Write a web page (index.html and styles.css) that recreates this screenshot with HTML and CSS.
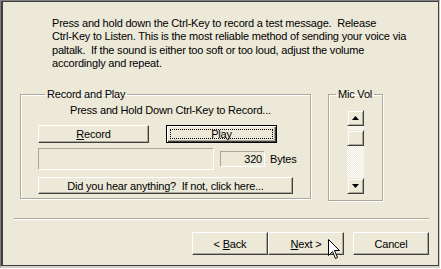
FILE: index.html
```html
<!DOCTYPE html>
<html lang="en">

<head>
    <meta charset="UTF-8">
    <title>Audio Setup</title>
    <link rel="stylesheet" href="styles.css">
</head>

<body>
    <div class="window">
        <div class="panel">
            <p class="intro">Press and hold down the Ctrl-Key to record a test message.&nbsp; Release<br>Ctrl-Key to Listen. This is the most reliable method of sending your voice via<br>paltalk.&nbsp; If the sound is either too soft or too loud, adjust the volume<br>accordingly and repeat.</p>

            <div class="groups">
                <fieldset class="group record-group">
                    <legend>Record and Play</legend>
                    <div class="hint">Press and Hold Down Ctrl-Key to Record...</div>
                    <div class="button-row">
                        <button class="btn btn-half"><u>R</u>ecord</button>
                        <button class="btn btn-half btn-default"><span class="focus">Play</span></button>
                    </div>
                    <div class="level-row">
                        <div class="level-field"></div>
                        <div class="bytes-field">320</div>
                        <span class="bytes-label">Bytes</span>
                    </div>
                    <button class="btn btn-full">Did you hear anything?&nbsp; If not, click here...</button>
                </fieldset>

                <fieldset class="group mic-group">
                    <legend>Mic Vol</legend>
                    <div class="scrollbar">
                        <div class="scroll-btn">
                            <svg width="7" height="4" viewBox="0 0 7 4"><polygon points="3.5,0 7,4 0,4" fill="#000"/></svg>
                        </div>
                        <div class="scroll-track">
                            <div class="scroll-thumb"></div>
                        </div>
                        <div class="scroll-btn">
                            <svg width="7" height="4" viewBox="0 0 7 4"><polygon points="0,0 7,0 3.5,4" fill="#000"/></svg>
                        </div>
                    </div>
                </fieldset>
            </div>

            <div class="separator"></div>

            <div class="nav-buttons">
                <button class="btn btn-nav">&lt; <u>B</u>ack</button>
                <button class="btn btn-nav"><u>N</u>ext &gt;</button>
                <button class="btn btn-nav btn-cancel">Cancel</button>
            </div>
        </div>

        <!-- mouse pointer resting on Next -->
        <svg class="cursor" width="12" height="20" viewBox="0 0 12 20">
            <polygon points="0.5,0.5 0.5,16.5 4.5,12.5 7.5,19.5 9.5,18.5 6.5,11.5 11.5,11.5" fill="#fff" stroke="#000" stroke-width="1"/>
        </svg>
    </div>
</body>

</html>
```

FILE: styles.css
```css
body {
    margin: 0;
    background-color: #ffffff;
    font-family: "Liberation Sans", Arial, sans-serif;
    font-size: 11px;
    letter-spacing: -0.2px;
    color: #000000;
}

.window {
    position: relative;
    width: 440px;
    height: 268px;
    box-sizing: border-box;
    border-top: 1px solid #808080;
    border-left: 1px solid #808080;
    border-right: 1px solid #d4d0c8;
    border-bottom: 2px solid #d4d0c8;
}

.panel {
    height: 100%;
    box-sizing: border-box;
    background-color: #ece9d8;
    border: 1px solid #404040;
    border-left-width: 2px;
}

.intro {
    margin: 0;
    padding: 15px 0 0 49px;
    line-height: 13.3px;
}

.groups {
    display: flex;
    align-items: flex-start;
    gap: 17px;
    margin: 18px 0 0 17px;
}

.group {
    margin: 0;
    border: 1px solid #aca899;
    box-shadow: inset 1px 1px 0 #ffffff, 1px 1px 0 #ffffff;
    min-width: 0;
}

.group legend {
    margin-left: 7px;
    padding: 0 2px;
    line-height: 13px;
}

.record-group {
    width: 291px;
    box-sizing: border-box;
    padding: 3px 0 4px 17px;
}

.mic-group {
    width: 55px;
    box-sizing: border-box;
    padding: 9px 0 6px 0;
    display: flex;
    justify-content: center;
}

.hint {
    line-height: 13px;
    padding-left: 32px;
}

.btn {
    font-family: "Liberation Sans", Arial, sans-serif;
    font-size: 11px;
    letter-spacing: -0.2px;
    color: #000000;
    background-color: #ece9d8;
    border: 1px solid;
    border-color: #ffffff #404040 #404040 #ffffff;
    box-shadow: inset -1px -1px 0 #aca899;
    padding: 0;
    margin: 0;
    box-sizing: border-box;
    cursor: default;
}

.btn u {
    text-decoration-thickness: 1px;
    text-underline-offset: 1px;
}

.button-row {
    display: flex;
    gap: 17px;
    margin-top: 8px;
}

.btn-half {
    width: 111px;
    height: 18px;
}

.btn-default {
    display: flex;
    padding: 3px;
    border: 1px solid #000000;
    box-shadow: inset 1px 1px 0 #ffffff, inset -1px -1px 0 #404040, inset -2px -2px 0 #aca899;
}

.focus {
    flex: 1;
    border: 1px dotted #000000;
    line-height: 8px;
}

.level-row {
    display: flex;
    align-items: center;
    margin-top: 5px;
}

.level-field {
    width: 176px;
    height: 22px;
    box-sizing: border-box;
    border: 1px solid;
    border-color: #aca899 #ffffff #ffffff #aca899;
}

.bytes-field {
    width: 45px;
    height: 16px;
    box-sizing: border-box;
    margin-left: 6px;
    border: 1px solid;
    border-color: #aca899 #ffffff #ffffff #aca899;
    text-align: right;
    padding-right: 2px;
    line-height: 14px;
}

.bytes-label {
    margin-left: 5px;
}

.btn-full {
    display: block;
    width: 255px;
    height: 17px;
    margin-top: 7px;
}

.scrollbar {
    width: 17px;
    display: flex;
    flex-direction: column;
}

.scroll-btn,
.scroll-thumb {
    height: 16px;
    box-sizing: border-box;
    background-color: #ece9d8;
    border: 1px solid;
    border-color: #ece9d8 #404040 #404040 #ece9d8;
    box-shadow: inset 1px 1px 0 #ffffff, inset -1px -1px 0 #aca899;
}

.scroll-btn {
    display: flex;
    align-items: center;
    justify-content: center;
}

.scroll-track {
    height: 52px;
    padding-top: 4px;
    box-sizing: border-box;
    background: repeating-conic-gradient(#ffffff 0 25%, #ece9d8 0 50%) 0 0 / 2px 2px;
}

.separator {
    margin: 17px 9px 0 11px;
    border-top: 1px solid #aca899;
    border-bottom: 1px solid #ffffff;
}

.nav-buttons {
    display: flex;
    justify-content: flex-end;
    margin: 12px 9px 0 0;
}

.btn-nav {
    width: 76px;
    height: 23px;
}

.btn-cancel {
    margin-left: 9px;
}

.cursor {
    position: absolute;
    left: 327px;
    top: 238px;
}
```
